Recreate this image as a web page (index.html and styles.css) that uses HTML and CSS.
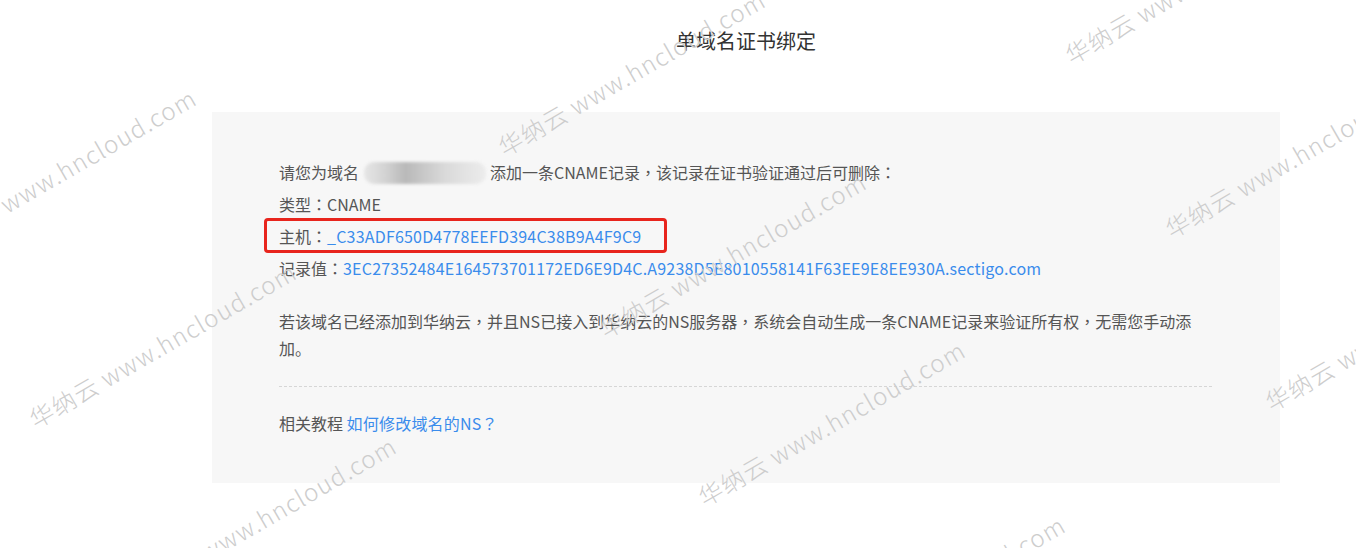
FILE: index.html
```html
<!DOCTYPE html>
<html lang="zh-CN">
<head>
    <meta charset="UTF-8">
    <meta name="viewport" content="width=device-width, initial-scale=1.0">
    <title>单域名证书绑定</title>
    <link rel="stylesheet" href="styles.css">
</head>
<body>
    <div class="page">
        <div class="content">
            <h2 class="title">单域名证书绑定</h2>
            <div class="panel">
                <div class="line">请您为域名<span class="masked"></span>添加一条CNAME记录<span class="p" lang="zh-TW">，</span>该记录在证书验证通过后可删除<span class="p" lang="zh-TW">：</span></div>
                <div class="line">类型<span class="p" lang="zh-TW">：</span>CNAME</div>
                <div class="line"><span class="host">主机<span class="p" lang="zh-TW">：</span><span class="val">_C33ADF650D4778EEFD394C38B9A4F9C9</span></span></div>
                <div class="line">记录值<span class="p" lang="zh-TW">：</span><span class="val">3EC27352484E164573701172ED6E9D4C.A9238D5E8010558141F63EE9E8EE930A.sectigo.com</span></div>
                <p class="tip">若该域名已经添加到华纳云<span class="p" lang="zh-TW">，</span>并且NS已接入到华纳云的NS服务器<span class="p" lang="zh-TW">，</span>系统会自动生成一条CNAME记录来验证所有权<span class="p" lang="zh-TW">，</span>无需您手动添加。</p>
                <div class="related">相关教程 <a href="#" class="val">如何修改域名的NS<span class="p" lang="zh-TW">？</span></a></div>
            </div>
        </div>

        <!-- watermark -->
        <div class="wm" style="left:-63px;top:233px">华纳云 www.hncloud.com</div>
        <div class="wm" style="left:37px;top:407px">华纳云 www.hncloud.com</div>
        <div class="wm" style="left:137px;top:581px">华纳云 www.hncloud.com</div>
        <div class="wm" style="left:506px;top:135px">华纳云 www.hncloud.com</div>
        <div class="wm" style="left:607px;top:317px">华纳云 www.hncloud.com</div>
        <div class="wm" style="left:706px;top:485px">华纳云 www.hncloud.com</div>
        <div class="wm" style="left:806px;top:660px">华纳云 www.hncloud.com</div>
        <div class="wm" style="left:1073px;top:43px">华纳云 www.hncloud.com</div>
        <div class="wm" style="left:1173px;top:217px">华纳云 www.hncloud.com</div>
        <div class="wm" style="left:1273px;top:390px">华纳云 www.hncloud.com</div>
    </div>
</body>
</html>
```

FILE: styles.css
```css
body {
    margin: 0;
    background-color: #fff;
    font-family: "Noto Sans CJK SC", "Microsoft YaHei", sans-serif;
    color: #555;
}
.page {
    position: relative;
    height: 100vh;
    overflow: hidden;
}
.content {
    width: 1068px;
    margin-left: 212px;
}
.title {
    margin: 27px 0 0;
    font-size: 20px;
    line-height: 28px;
    font-weight: normal;
    color: #333;
    text-align: center;
}
.panel {
    margin-top: 57px;
    height: 371px;
    box-sizing: border-box;
    padding: 44px 68px 0 67px;
    background-color: #f7f7f7;
    font-size: 16px;
}
.line {
    line-height: 32px;
    white-space: nowrap;
}
/* centred full-width punctuation */
.p {
    font-family: "Noto Sans CJK TC", "Noto Sans CJK SC", sans-serif;
    letter-spacing: 0;
}
.val {
    color: #3a8cec;
    text-decoration: none;
    letter-spacing: 0.2px;
}
.masked {
    display: inline-block;
    width: 122px;
    height: 22px;
    margin: 0 4px 0 5px;
    vertical-align: -5px;
    border-radius: 10px;
    background: linear-gradient(90deg, #e6e6e6, #d2d2d2 18%, #b9b9b9 34%, #c7c7c7 48%, #d9d9d9 66%, #e4e4e4 85%, #ececec);
    filter: blur(1.5px);
}
.host {
    position: relative;
    display: inline-block;
}
.host::after {
    content: "";
    position: absolute;
    left: -15px;
    right: -26px;
    top: -2px;
    bottom: -1px;
    border: 3px solid #e8251d;
    border-radius: 4px;
}
.tip {
    margin: 24px 0 0;
    line-height: 27px;
    padding-bottom: 24px;
    border-bottom: 1px dashed #d6d6d6;
}
.related {
    margin-top: 20px;
    line-height: 32px;
}
.wm {
    position: absolute;
    font-size: 24px;
    line-height: 24px;
    font-weight: 300;
    letter-spacing: 1.2px;
    color: #cdcdcd;
    white-space: nowrap;
    transform: rotate(-30deg);
    transform-origin: 0 100%;
    pointer-events: none;
}
```
